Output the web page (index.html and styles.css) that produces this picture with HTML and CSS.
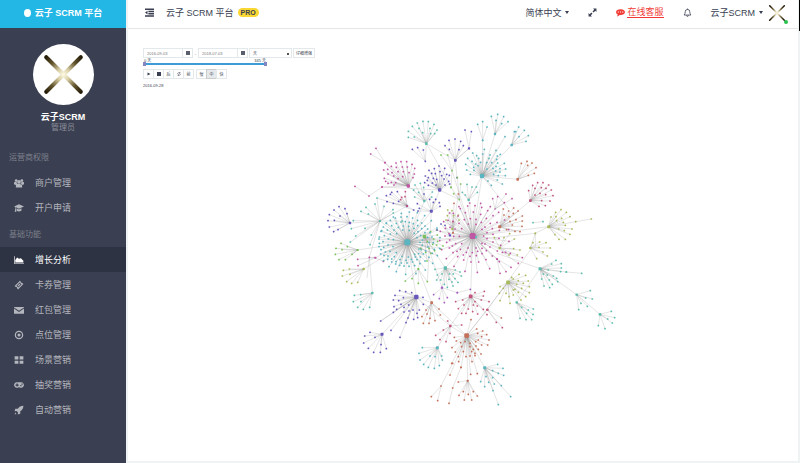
FILE: index.html
```html
<!DOCTYPE html>
<html lang="zh-CN">
<head>
<meta charset="utf-8">
<title>云子 SCRM 平台</title>
<link rel="stylesheet" href="styles.css">
</head>
<body>
<svg class="defs" aria-hidden="true">
  <defs>
    <radialGradient id="glow" gradientUnits="userSpaceOnUse" cx="30" cy="30" r="26">
      <stop offset="0" stop-color="#fffbe6"/><stop offset=".25" stop-color="#d8cda4"/><stop offset=".6" stop-color="#63552d"/><stop offset="1" stop-color="#1c1403"/>
    </radialGradient>
    <symbol id="cross" viewBox="0 0 60 60">
      <path d="M13 13 47 47M47 13 13 47" stroke="url(#glow)" stroke-width="4" stroke-linecap="round" fill="none"/>
    </symbol>
    <symbol id="cross-small" viewBox="0 0 60 60">
      <path d="M10 10 50 50M50 10 10 50" stroke="url(#glow)" stroke-width="4" stroke-linecap="round" fill="none"/>
    </symbol>
  </defs>
</svg>
<aside class="sidebar">
  <a class="brand" href="#"><span class="brand-dot"></span>云子 SCRM 平台</a>
  <div class="profile">
    <svg class="avatar" role="img" aria-label="云子SCRM"><use href="#cross"/></svg>
    <strong>云子SCRM</strong>
    <span>管理员</span>
  </div>
  <nav class="menu">
    <h2>运营商权限</h2>
    <a href="#"><svg viewBox="0 0 16 16"><circle cx="3.5" cy="4" r="2.2"/><circle cx="12.5" cy="4" r="2.2"/><circle cx="8" cy="6" r="3"/><path d="M0 10V8q0-2 2-2h2q0 3 2 4l-3 1zM16 10V8q0-2-2-2h-2q0 3-2 4l3 1zM3 15v-3q0-3 3-3h4q3 0 3 3v3z"/></svg>商户管理</a>
    <a href="#"><svg viewBox="0 0 16 16"><path d="M8 2 16 5.500 8 9 3 6.800v2.700l.8 4.500H1l1-4.500V6.400L0 5.500zM4 8.500l4 1.800 4-1.800V12q-4 3-8 0z"/></svg>开户申请</a>
    <h2>基础功能</h2>
    <a class="active" href="#"><svg viewBox="0 0 16 16"><path d="M0 2h1v11h15v1H0zM2 12V8l3-4 3 2 3-1 4 4v3z"/></svg>增长分析</a>
    <a href="#"><svg viewBox="0 0 16 16"><path fill-rule="evenodd" d="m9.500 1 1.300 1.300a1.500 1.500 0 0 0 2 2L15 6.500 6.500 15l-1.700-1.700a1.500 1.500 0 0 0-2-2L1 9.500zM9 4 4 9l3 3 5-5zm0 1.700L10.300 7 7 10.300 5.700 9z"/></svg>卡券管理</a>
    <a href="#"><svg viewBox="0 0 16 16"><path d="M0 3h16v1L8 9 0 4zM0 5.500 8 11l8-5.500V14H0z"/></svg>红包管理</a>
    <a href="#"><svg viewBox="0 0 16 16"><circle cx="8" cy="8" r="5.800" fill="none" stroke="currentColor" stroke-width="2"/><circle cx="8" cy="8" r="2.500"/></svg>点位管理</a>
    <a href="#"><svg viewBox="0 0 16 16"><path d="M1 2h6v5H1zM9 2h6v5H9zM1 9h6v5H1zM9 9h6v5H9z"/></svg>场景营销</a>
    <a href="#"><svg viewBox="0 0 16 16"><path fill-rule="evenodd" d="M4.500 3.500h7a4.500 4.500 0 1 1-3 8h-1a4.500 4.500 0 1 1-3-8zM4 5.500V7H2.500v2H4v1.500h2V9h1.500V7H6V5.500zM10 8v2h2V8zm2-2.500v2h2v-2z"/></svg>抽奖营销</a>
    <a href="#"><svg viewBox="0 0 16 16"><path d="M15 1q0 6-5 9v4l-4 1 .5-3-2.500-2.500L1 10l1-4h4q3-5 9-5zM2 12l2 2-3 1z"/></svg>自动营销</a>
  </nav>
</aside>
<div class="page">
  <header class="topbar">
    <button class="icon" aria-label="折叠菜单"><svg viewBox="0 0 16 16"><path d="M0 1h16v2.400H0zM6 5h10v2.400H6zM6 9h10v2.400H6zM0 13h16v2.400H0zM4.500 5v6.400L0 8.200z"/></svg></button>
    <span class="title">云子 SCRM 平台</span>
    <span class="pro">PRO</span>
    <div class="tools">
      <button>简体中文<i class="caret"></i></button>
      <button class="icon" aria-label="全屏"><svg viewBox="0 0 16 16"><path d="M9 1h6v6l-2-2-3 3-2-2 3-3zM7 15H1V9l2 2 3-3 2 2-3 3z"/></svg></button>
      <a class="service" href="#"><svg viewBox="0 0 16 16"><path fill-rule="evenodd" d="M8 2c4.500 0 8 2.200 8 5.200s-3.500 5.300-8 5.300l-1.500-.1Q4.500 15 1.500 15q1.500-1.500 1.500-3.500Q0 10 0 7.200C0 4.200 3.500 2 8 2zM3 6v2h2V6zm4 0v2h2V6zm4 0v2h2V6z"/></svg><span>在线客服</span></a>
      <button class="icon" aria-label="通知"><svg viewBox="0 0 16 16"><path d="M2 12.500Q4 10 4 6.500a4 4 0 0 1 8 0q0 3.500 2 6zM6.500 13q0 2 1.500 2t1.500-2M8 1v2" fill="none" stroke="currentColor" stroke-width="1.400"/></svg></button>
      <button class="account">云子SCRM<i class="caret"></i><span class="mini"><svg><use href="#cross-small"/></svg></span></button>
    </div>
  </header>
  <main>
    <form class="controls">
      <div class="row">
        <div class="date"><input aria-label="开始日期" value="2016-09-03"><button type="button" aria-label="选择开始日期"><i></i></button></div>
        <span class="dash">-</span>
        <div class="date"><input aria-label="结束日期" value="2018-07-03"><button type="button" aria-label="选择结束日期"><i></i></button></div>
        <select aria-label="单位"><option>天</option></select>
        <button type="button" class="detail">仔细增强</button>
      </div>
      <div class="range">
        <div class="range-labels"><span>0 天</span><span>345 天</span></div>
        <div class="track"></div>
      </div>
      <div class="row player">
        <div class="group">
          <button type="button" aria-label="播放"><svg viewBox="0 0 8 8"><path d="M1 1l6 3-6 3z"/></svg></button>
          <button type="button" aria-label="停止"><svg viewBox="0 0 8 8"><path d="M0 0h8v8H0z"/></svg></button>
          <button type="button">后</button>
          <button type="button" aria-label="重播"><svg viewBox="0 0 8 8"><path d="M1 4a3 3 0 0 1 5-2M7 4a3 3 0 0 1-5 2M6 0v2.500H4M2 8V5.500h2" fill="none" stroke="currentColor"/></svg></button>
          <button type="button">前</button>
        </div>
        <div class="group">
          <button type="button">慢</button>
          <button type="button" class="on">中</button>
          <button type="button">快</button>
        </div>
      </div>
      <time>2016-09-28</time>
    </form>
    <svg class="graph" id="graph" viewBox="960 330 960 900" role="img" aria-label="增长关系图"></svg>
  </main>
</div>
<script src="graph.js"></script>
</body>
</html>
```
FILE: styles.css
```css
* { box-sizing: border-box; }
body {
  margin: 0;
  display: grid;
  grid-template-columns: 126px minmax(0, 1fr);
  min-height: 100vh;
  font: 9px/12px "Liberation Sans", "Noto Sans CJK SC", sans-serif;
  color: #3a3f51;
  background: #f0f3f4;
}
a { color: inherit; text-decoration: none; }
button { font: inherit; color: inherit; background: none; border: 0; padding: 0; }
svg { fill: currentColor; }
.defs { position: absolute; width: 0; height: 0; }

.sidebar { background: #3a3f51; color: #b4b6bd; }
.brand {
  display: flex; align-items: center; justify-content: center; gap: 4px;
  height: 28px; padding-bottom: 2px; background: #23b7e5; color: #fff; font-weight: bold;
}
.brand-dot { width: 7px; height: 8px; border-radius: 50%; background: #fff; }
.profile { display: flex; flex-direction: column; align-items: center; padding: 16px 0 10px; }
.avatar { width: 61px; height: 61px; border-radius: 50%; background: #fff; margin-bottom: 6px; }
.profile strong { color: #fff; }
.profile span { font-size: 8px; line-height: 10px; color: #8b8e99; }
.menu h2 { margin: 3px 0 0; padding: 0 9px; font-size: 8px; line-height: 24px; font-weight: normal; color: #7d808c; }
.menu a { display: flex; align-items: center; gap: 11px; height: 25px; padding-left: 14px; }
.menu svg { width: 10px; height: 10px; }
.menu .active { background: #2e3344; color: #fff; }

.page { display: flex; flex-direction: column; padding: 0 2px 2px; }
.page::after {
  content: ""; position: absolute; top: 0; right: 0; width: 1px; height: 31px; background: #000;
}
.topbar {
  display: flex; align-items: center; height: 28px; padding: 0 10px 3px 17px;
  background: #fff;
}
.topbar svg { display: block; width: 9px; height: 9px; }
.title { margin-left: 12px; }
.pro {
  margin-left: 4px; padding: 0 3px; border-radius: 5px; background: #fad733;
  font-size: 7px; line-height: 9px; font-weight: bold;
}
.tools { display: flex; align-items: center; gap: 19px; margin-left: auto; }
.tools button { display: flex; align-items: center; }
.caret { margin-left: 4px; border: 2px solid transparent; border-top: 3px solid; border-bottom: 0; }
.service { display: flex; align-items: center; gap: 2px; color: #f03c35; }
.service span { border-bottom: 1px solid; line-height: 10px; }
.mini { position: relative; margin-left: 3px; }
.topbar .mini svg { width: 22px; height: 22px; }
.mini::after {
  content: ""; position: absolute; right: 0; bottom: 0;
  width: 4px; height: 4px; border-radius: 50%; background: #27c24c;
}

main { flex: 1; background: #fff; border-top: 1px solid #e4e6e8; padding: 19px 15px 0; }
.controls { font-size: 4px; line-height: 5px; }
.row { display: flex; align-items: center; }
.date { display: flex; width: 50px; height: 10px; border: 1px solid #e3e8ea; }
.date input { flex: 1; min-width: 0; border: 0; padding: 0 3px; font: inherit; color: #777; }
.date button { width: 10px; border-left: 1px solid #e3e8ea; display: grid; place-items: center; }
.date i { width: 4px; height: 4px; background: #5a5f6e; }
.dash { width: 5px; text-align: center; }
.row select {
  width: 43px; height: 10px; margin: 0 1px; padding: 0 3px; border: 1px solid #e3e8ea;
  font: inherit; color: inherit; appearance: none;
  background: #fff conic-gradient(from -45deg at 50% 100%, #555 0 0) no-repeat 37px 4px / 2px 2px;
}
.row .detail, .group button { border: 1px solid #e3e8ea; }
.row .detail { height: 10px; padding: 0 2px; }
.range { width: 124px; }
.range-labels { display: flex; justify-content: space-between; padding: 0 1px; }
.track { position: relative; height: 2px; background: #3d9bd6; }
.track::before, .track::after {
  content: ""; position: absolute; top: -1px; left: 0; width: 3px; height: 4px; background: #8287c4;
}
.track::after { left: auto; right: 0; }
.player { gap: 3px; margin: 4px 0; }
.group { display: flex; }
.group button { display: grid; place-items: center; width: 11px; height: 10px; margin-right: -1px; }
.group svg { width: 4px; height: 4px; }
.group .on { background: #e6e9eb; border-color: #ccc; }
.controls time { display: block; }
.graph { display: block; width: 100%; max-width: 320px; margin: 22px 0 0 177px; }
```
FILE: graph.js
```js
// Nodes are grouped in four tiles: upper-left, upper-right, lower-left, lower-right.
const tiles = { A: [960, 315], B: [1380, 315], C: [960, 750], D: [1380, 750] };
const colors = {
  t: '#5bbdae', i: '#6557bd', m: '#c057a5', g: '#79c257', c: '#5ab5c0',
  y: '#a9bc5c', o: '#c5705a', r: '#c25480', p: '#a35fc4'
};
// tile, x, y, size, colour, leaves
const clusters = [
  ['A',319,116,8,'t','265,79 277,64 292,54 309,49 325,50 342,58 351,75 265,97 283,96 297,70 330,70 344,86 332,86 308,83'],
  ['A',406,166,8,'i','375,122 387,106 405,102 422,109 388,133 417,134 430,122 411,218'],
  ['A',447,130,7,'i','435,75 454,80 406,166'],
  ['A',316,169,5,'i','277,133 293,128 310,135'],
  ['A',265,243,10,'m','191,195 203,193 214,184 228,174 243,170 260,170 276,178 204,207 216,203 229,187 247,186 262,186 284,190 193,220 197,229 204,235 221,213 234,200 250,200 267,203 283,207 214,232 227,233 234,221 222,240 248,215 279,218 186,246 195,173'],
  ['A',147,273,5,'m','186,246 105,244'],
  ['A',195,173,5,'m','152,147 168,130'],
  ['A',359,255,10,'i','327,196 343,191 357,183 374,190 316,213 325,218 335,205 346,206 360,200 380,208 388,211 314,233 322,226 340,220 350,223 365,212 372,222 386,229 389,237 325,241 337,234 375,240 348,240'],
  ['A',396,197,5,'g','363,150 383,150 393,247'],
  ['A',313,288,7,'t','285,240 301,235 311,247 281,255 296,262 284,276 337,261 335,276'],
  ['A',261,303,7,'i','199,272 201,290 215,262 232,260 220,295 236,289 211,268 281,315'],
  ['A',261,303,6,'r','256,260 245,277 255,275 242,284'],
  ['A',334,319,9,'i','292,296 298,310 294,318 312,267 329,283 340,292 347,283 358,293 360,304'],
  ['A',90,354,7,'i','24,347 28,366 28,329 42,315 57,305 75,311 81,326 41,380 54,374 43,346 60,333'],
  ['A',113,435,6,'g','48,430 63,415 46,448 57,464 76,464 96,448 66,434 82,425'],
  ['A',180,348,6,'t','123,319 138,307 145,327 94,371 100,347 171,279 165,297 154,390 107,393 135,370 192,304 219,314 247,348 220,324 91,411 150,419'],
  ['A',313,394,10,'g','332,380 351,375 352,390 341,402 353,409 338,418 350,420 362,432 327,430 317,442 333,445 344,437 302,430 322,410 321,468 369,423'],
  ['A',397,372,6,'y','382,332 401,332 415,330 417,345 378,345 396,317 383,315'],
  ['A',390,391,7,'i','363,357 375,361 351,375'],
  ['A',399,383,6,'o','415,267 402,295 399,350'],
  ['A',446,285,7,'t','441,238 456,246 427,262 469,246 472,262 436,270'],
  ['A',418,284,5,'g','412,218 393,247 422,237 401,266'],
  ['B',66,213,13,'c','38,144 50,152 73,133 90,150 17,178 20,195 31,208 36,169 47,177 56,160 68,147 80,173 87,160 95,173 108,136 112,153 121,148 110,163 99,190 108,184 120,191 137,192 133,175 113,174 107,198 120,201 115,212 136,212 101,208 127,237 112,225 94,241 84,228 68,106 135,95 155,120 105,87 62,172 81,192 42,196 54,182 41,187 23,160'],
  ['B',68,106,5,'c','53,58 68,50 81,66'],
  ['B',105,87,7,'c','94,34 113,28 131,35 144,50 108,46 125,56'],
  ['B',155,120,7,'c','163,80 176,66 193,76 205,92 198,109 177,95 167,80'],
  ['B',173,223,8,'o','184,175 201,169 216,174 228,188 203,181 223,205 205,211'],
  ['B',211,287,8,'r','206,257 218,241 233,233 249,233 266,240 274,255 279,272 225,250 244,248 258,250 240,265 257,269 270,288 225,270 245,287 237,304 256,302'],
  ['B',266,365,9,'y','273,336 287,322 303,314 319,322 330,335 336,372 330,388 316,403 297,403 285,389 305,340 290,347 310,352 316,361 313,377 296,372 288,335 347,350 226,385'],
  ['B',347,350,4,'y','394,342'],
  ['B',219,353,5,'t','249,350'],
  ['B',119,365,9,'o','130,312 146,318 161,309 174,318 132,330 147,335 160,325 187,333 150,349 168,344 187,348 157,360 186,364 180,380 165,379 140,374'],
  ['B',119,429,7,'y','132,398 163,402 149,386 180,435 161,431 172,450 147,450 103,398'],
  ['B',211,429,7,'y','219,413 239,411 258,413 271,429 237,427 249,441 262,453 230,461 226,385'],
  ['B',105,312,4,'m','138,267 156,281 98,281 113,275 133,293'],
  ['C',166,23,6,'m','113,28 114,47 190,34 148,22'],
  ['C',131,57,7,'y','70,61 88,57 67,78 80,95 95,100 113,97 90,73'],
  ['C',157,129,7,'t','103,136 122,134 100,155 113,172 130,178 149,172 123,155'],
  ['C',289,141,13,'i','239,122 257,125 275,128 225,136 220,150 236,152 250,143 222,170 230,178 243,163 220,187 252,172 266,165 252,186 267,183 264,204 279,180 281,208 293,203 298,180 291,190 309,142 310,163 182,213 258,218 240,262 213,241'],
  ['C',186,253,9,'i','134,258 150,247 131,279 145,295 161,307 181,307 199,296 183,284 165,262'],
  ['C',295,57,6,'g','256,93 276,86 295,100 322,95'],
  ['C',376,54,10,'t','345,58 352,75 366,72 350,90 362,90 373,103 382,112 396,96 399,108 414,97 405,86 387,88 424,78 420,66 406,60 400,72 388,72'],
  ['C',366,113,7,'p','341,134 358,146 373,158 382,143 412,128'],
  ['C',412,128,5,'p','451,118'],
  ['C',335,158,8,'o','318,180 306,200 310,220 327,220 345,212 357,177 361,195 330,205 321,192'],
  ['C',452,139,11,'r','407,155 428,150 415,176 425,190 438,190 445,177 460,165 432,165 465,128 493,124 490,138 507,155 484,150 465,155 472,168 490,178 501,194 473,192 458,185'],
  ['C',391,228,7,'r','347,256 360,269 378,275 383,213 370,240 390,250 425,225'],
  ['C',352,293,9,'c','307,293 297,310 300,330 311,343 325,352 343,355 358,347 367,330 365,318 345,320 330,318'],
  ['C',440,257,13,'o','403,262 409,273 396,293 406,306 415,320 425,290 430,305 438,320 422,278 395,340 416,335 390,375 423,352 453,209 435,275 450,280 455,305 465,317'],
  ['C',398,414,5,'o','387,460 423,352'],
  ['C',363,408,5,'o','334,440 353,452 398,340'],
  ['C',443,392,6,'o','417,436 433,450 430,425 445,433 455,450 460,425 472,438 415,396'],
  ['D',20,257,13,'o','50,237 68,243 80,254 87,270 53,250 65,260 55,270 65,285 83,285 48,288 40,298 63,312 45,310 30,318 55,298 30,290 36,335 32,373 52,371 47,275'],
  ['D',144,97,11,'y','155,82 177,73 197,76 205,93 208,110 208,128 197,140 183,150 160,87 175,92 190,100 170,103 185,115 165,118 175,127 160,135 150,160 120,152 120,110 130,115 138,130 118,130 160,120 147,140'],
  ['D',170,157,7,'t','220,177 219,193 215,209 198,209 180,205 200,190 185,172 205,180'],
  ['D',240,56,9,'t','288,31 304,41 304,54 302,65 319,66 275,42 265,60 262,75 280,78 290,85 293,95 268,90 277,103 269,113 252,108 245,87 250,72'],
  ['D',319,66,5,'t','365,70'],
  ['D',350,134,7,'t','391,122 397,147 377,144 382,169 363,160 356,179'],
  ['D',420,193,8,'t','454,184 464,203 457,219 435,236 415,227 443,207'],
  ['D',74,353,9,'c','113,343 129,355 98,362 115,370 131,376 62,395 78,380 98,383 86,397 74,410 103,402 124,407 99,422 152,440 115,464'],
  ['D',82,179,6,'o','124,204'],
  ['D',82,179,6,'r','127,233 109,217'],
  ['D',111,27,6,'m','120,70 138,65 153,52'],
  ['D',127,7,5,'m','151,10 175,40 187,23']
];
const links = [
  'A319,116 A406,166','A319,116 A389,237','A406,166 A396,197','A447,130 A406,166','A316,169 A319,116',
  'A195,173 A265,243','A186,246 A359,255','A265,243 A313,288','A359,255 A334,319','A359,255 A418,284',
  'A261,303 A180,348','A334,319 A262,412','A90,354 A180,348','A113,435 A262,412','A262,412 A180,348',
  'A262,412 A458,393','A313,394 A262,412','A313,288 A262,412','A397,372 A458,393','A446,285 B66,213',
  'B66,213 A458,393','B66,213 B173,223','B66,213 B146,312','B211,287 B119,365','B119,365 A458,393',
  'B266,365 A458,393','B226,385 B103,398','B226,385 B226,425','B119,429 A458,393','B105,312 A458,393',
  'C289,141 A262,412','C157,129 C148,22','C148,22 A180,348','C131,57 A262,412','C166,23 A262,412',
  'C186,253 C289,141','C182,213 C289,141','C295,57 A313,394','C335,158 C295,57','C335,158 C289,141',
  'C376,54 A313,394','C376,54 A458,393','C366,113 C376,54','C391,228 C289,141','C391,228 C452,139',
  'C452,139 A458,393','C440,257 C391,228','C440,257 C335,158','C352,293 C391,228','C440,257 C443,392',
  'C440,257 D82,179','D82,179 D211,0','D144,97 D20,257','D170,157 D240,56','D240,56 D111,10',
  'D240,56 D350,134','D350,134 D420,193','D74,353 D20,257','A418,284 A458,393','A334,319 C322,95',
  'A396,197 A458,393','C366,113 A313,394','A171,279 A281,315','D111,27 A458,393','C141,84 C148,22'
];
const at = (tile, x, y) => [tiles[tile][0] + x, tiles[tile][1] + y];
const lines = [], dots = [];
const dot = (x, y, s, c) => dots.push(`<rect x="${x - s / 2}" y="${y - s / 2}" width="${s}" height="${s}" rx="${s / 4}" fill="${colors[c]}"/>`);
const line = (a, b) => lines.push(`<path d="M${a}L${b}"/>`);

for (const [tile, x, y, size, color, leaves] of clusters) {
  const hub = at(tile, x, y);
  for (const leaf of leaves.split(' ')) {
    const p = at(tile, ...leaf.split(',').map(Number));
    line(hub, p);
    dot(...p, 5, color);
  }
  dot(...hub, size, color);
}
for (const link of links) {
  line(...link.split(' ').map(s => at(s[0], ...s.slice(1).split(',').map(Number))));
}
// Dense radial hubs: rings of leaves as [radius, count].
function burst(hub, size, color, rings) {
  rings.forEach(([radius, count], k) => {
    for (let n = 0; n < count; n++) {
      const angle = (n + k * 0.4) / count * 2 * Math.PI + Math.sin(n * 7 + k) * 0.05;
      const r = radius + Math.sin(n * 12.9 + k * 5) * 7;
      const p = [Math.round(hub[0] + r * Math.cos(angle)), Math.round(hub[1] + r * Math.sin(angle))];
      line(hub, p);
      dot(...p, 5, color);
    }
  });
  dot(...hub, size, color);
}
burst(at('A', 262, 412), 18, 'c', [[38, 13], [52, 20], [66, 27], [79, 31], [92, 22]]);
burst(at('A', 458, 393), 18, 'm', [[33, 10], [50, 17], [67, 21], [84, 24], [104, 20]]);
dot(...at('A', 468, 396), 6, 'c');

document.getElementById('graph').innerHTML =
  `<g fill="none" stroke="#888" stroke-opacity=".22" stroke-width="3">${lines.join('')}</g>${dots.join('')}`;
```
